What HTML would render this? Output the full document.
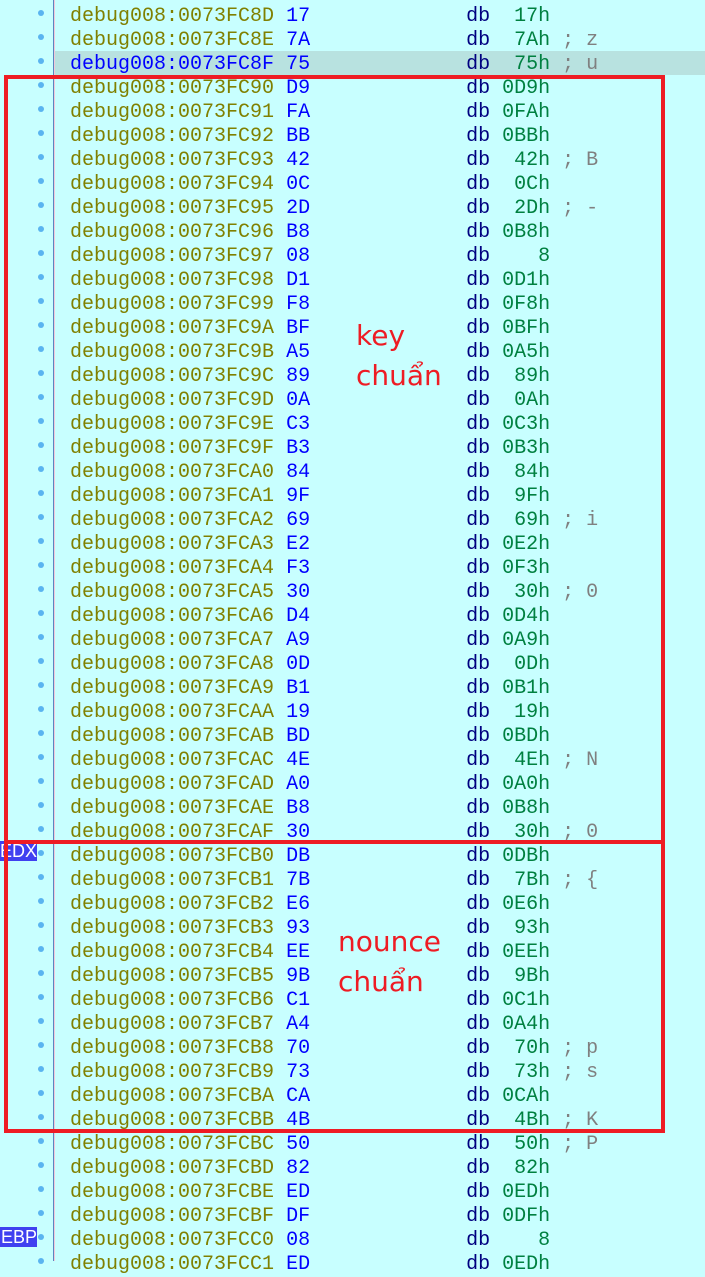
<!DOCTYPE html>
<html><head><meta charset="utf-8"><style>
body{margin:0;width:705px;height:1261px;overflow:hidden;background:#c8ffff;position:relative;font-family:"Liberation Mono",monospace}
#rows{position:absolute;left:0;top:3px;width:705px}
.r{position:relative;height:24px;line-height:24px;font-size:20px;white-space:pre}
.r .t{position:absolute;left:70px;top:2px}
.r.h{background:#b8e2e0}
.r.h::before{content:"";position:absolute;left:0;top:0;width:54px;height:24px;background:#c8ffff}
.d{position:absolute;left:38px;top:7px;width:6px;height:6px;border-radius:50%;background:#5ab4f0}
.a{color:#808000}.b{color:#0000ff}.k{color:#000080}.v{color:#008040}.c{color:#808080}
.h .a{color:#0000ff}
#vl{position:absolute;left:53px;top:0;width:1px;height:1261px;background:#5a86c0}
#vl2{position:absolute;left:54px;top:0;width:1px;height:1261px;background:#f0c8d8}
.box{position:absolute;border:4px solid #ee1c24;box-sizing:border-box}
.lbl{position:absolute;color:#ee1c24;font-family:"DejaVu Sans","Liberation Sans",sans-serif;font-size:28px;line-height:40px}
.reg{position:absolute;left:0;width:37px;height:20px;background:#4040f0;color:#fff;font-family:"Liberation Sans",sans-serif;font-size:18px;line-height:20px;text-align:right}
</style></head><body>
<div id="rows">
<div class="r"><i class="d"></i><span class="t"><span class="a">debug008:0073FC8D</span> <span class="b">17</span>             <span class="k">db</span> <span class="v"> 17h</span></span></div>
<div class="r"><i class="d"></i><span class="t"><span class="a">debug008:0073FC8E</span> <span class="b">7A</span>             <span class="k">db</span> <span class="v"> 7Ah</span> <span class="c">; z</span></span></div>
<div class="r h"><i class="d"></i><span class="t"><span class="a">debug008:0073FC8F</span> <span class="b">75</span>             <span class="k">db</span> <span class="v"> 75h</span> <span class="c">; u</span></span></div>
<div class="r"><i class="d"></i><span class="t"><span class="a">debug008:0073FC90</span> <span class="b">D9</span>             <span class="k">db</span> <span class="v">0D9h</span></span></div>
<div class="r"><i class="d"></i><span class="t"><span class="a">debug008:0073FC91</span> <span class="b">FA</span>             <span class="k">db</span> <span class="v">0FAh</span></span></div>
<div class="r"><i class="d"></i><span class="t"><span class="a">debug008:0073FC92</span> <span class="b">BB</span>             <span class="k">db</span> <span class="v">0BBh</span></span></div>
<div class="r"><i class="d"></i><span class="t"><span class="a">debug008:0073FC93</span> <span class="b">42</span>             <span class="k">db</span> <span class="v"> 42h</span> <span class="c">; B</span></span></div>
<div class="r"><i class="d"></i><span class="t"><span class="a">debug008:0073FC94</span> <span class="b">0C</span>             <span class="k">db</span> <span class="v"> 0Ch</span></span></div>
<div class="r"><i class="d"></i><span class="t"><span class="a">debug008:0073FC95</span> <span class="b">2D</span>             <span class="k">db</span> <span class="v"> 2Dh</span> <span class="c">; -</span></span></div>
<div class="r"><i class="d"></i><span class="t"><span class="a">debug008:0073FC96</span> <span class="b">B8</span>             <span class="k">db</span> <span class="v">0B8h</span></span></div>
<div class="r"><i class="d"></i><span class="t"><span class="a">debug008:0073FC97</span> <span class="b">08</span>             <span class="k">db</span> <span class="v">   8</span></span></div>
<div class="r"><i class="d"></i><span class="t"><span class="a">debug008:0073FC98</span> <span class="b">D1</span>             <span class="k">db</span> <span class="v">0D1h</span></span></div>
<div class="r"><i class="d"></i><span class="t"><span class="a">debug008:0073FC99</span> <span class="b">F8</span>             <span class="k">db</span> <span class="v">0F8h</span></span></div>
<div class="r"><i class="d"></i><span class="t"><span class="a">debug008:0073FC9A</span> <span class="b">BF</span>             <span class="k">db</span> <span class="v">0BFh</span></span></div>
<div class="r"><i class="d"></i><span class="t"><span class="a">debug008:0073FC9B</span> <span class="b">A5</span>             <span class="k">db</span> <span class="v">0A5h</span></span></div>
<div class="r"><i class="d"></i><span class="t"><span class="a">debug008:0073FC9C</span> <span class="b">89</span>             <span class="k">db</span> <span class="v"> 89h</span></span></div>
<div class="r"><i class="d"></i><span class="t"><span class="a">debug008:0073FC9D</span> <span class="b">0A</span>             <span class="k">db</span> <span class="v"> 0Ah</span></span></div>
<div class="r"><i class="d"></i><span class="t"><span class="a">debug008:0073FC9E</span> <span class="b">C3</span>             <span class="k">db</span> <span class="v">0C3h</span></span></div>
<div class="r"><i class="d"></i><span class="t"><span class="a">debug008:0073FC9F</span> <span class="b">B3</span>             <span class="k">db</span> <span class="v">0B3h</span></span></div>
<div class="r"><i class="d"></i><span class="t"><span class="a">debug008:0073FCA0</span> <span class="b">84</span>             <span class="k">db</span> <span class="v"> 84h</span></span></div>
<div class="r"><i class="d"></i><span class="t"><span class="a">debug008:0073FCA1</span> <span class="b">9F</span>             <span class="k">db</span> <span class="v"> 9Fh</span></span></div>
<div class="r"><i class="d"></i><span class="t"><span class="a">debug008:0073FCA2</span> <span class="b">69</span>             <span class="k">db</span> <span class="v"> 69h</span> <span class="c">; i</span></span></div>
<div class="r"><i class="d"></i><span class="t"><span class="a">debug008:0073FCA3</span> <span class="b">E2</span>             <span class="k">db</span> <span class="v">0E2h</span></span></div>
<div class="r"><i class="d"></i><span class="t"><span class="a">debug008:0073FCA4</span> <span class="b">F3</span>             <span class="k">db</span> <span class="v">0F3h</span></span></div>
<div class="r"><i class="d"></i><span class="t"><span class="a">debug008:0073FCA5</span> <span class="b">30</span>             <span class="k">db</span> <span class="v"> 30h</span> <span class="c">; 0</span></span></div>
<div class="r"><i class="d"></i><span class="t"><span class="a">debug008:0073FCA6</span> <span class="b">D4</span>             <span class="k">db</span> <span class="v">0D4h</span></span></div>
<div class="r"><i class="d"></i><span class="t"><span class="a">debug008:0073FCA7</span> <span class="b">A9</span>             <span class="k">db</span> <span class="v">0A9h</span></span></div>
<div class="r"><i class="d"></i><span class="t"><span class="a">debug008:0073FCA8</span> <span class="b">0D</span>             <span class="k">db</span> <span class="v"> 0Dh</span></span></div>
<div class="r"><i class="d"></i><span class="t"><span class="a">debug008:0073FCA9</span> <span class="b">B1</span>             <span class="k">db</span> <span class="v">0B1h</span></span></div>
<div class="r"><i class="d"></i><span class="t"><span class="a">debug008:0073FCAA</span> <span class="b">19</span>             <span class="k">db</span> <span class="v"> 19h</span></span></div>
<div class="r"><i class="d"></i><span class="t"><span class="a">debug008:0073FCAB</span> <span class="b">BD</span>             <span class="k">db</span> <span class="v">0BDh</span></span></div>
<div class="r"><i class="d"></i><span class="t"><span class="a">debug008:0073FCAC</span> <span class="b">4E</span>             <span class="k">db</span> <span class="v"> 4Eh</span> <span class="c">; N</span></span></div>
<div class="r"><i class="d"></i><span class="t"><span class="a">debug008:0073FCAD</span> <span class="b">A0</span>             <span class="k">db</span> <span class="v">0A0h</span></span></div>
<div class="r"><i class="d"></i><span class="t"><span class="a">debug008:0073FCAE</span> <span class="b">B8</span>             <span class="k">db</span> <span class="v">0B8h</span></span></div>
<div class="r"><i class="d"></i><span class="t"><span class="a">debug008:0073FCAF</span> <span class="b">30</span>             <span class="k">db</span> <span class="v"> 30h</span> <span class="c">; 0</span></span></div>
<div class="r"><i class="d"></i><span class="t"><span class="a">debug008:0073FCB0</span> <span class="b">DB</span>             <span class="k">db</span> <span class="v">0DBh</span></span></div>
<div class="r"><i class="d"></i><span class="t"><span class="a">debug008:0073FCB1</span> <span class="b">7B</span>             <span class="k">db</span> <span class="v"> 7Bh</span> <span class="c">; {</span></span></div>
<div class="r"><i class="d"></i><span class="t"><span class="a">debug008:0073FCB2</span> <span class="b">E6</span>             <span class="k">db</span> <span class="v">0E6h</span></span></div>
<div class="r"><i class="d"></i><span class="t"><span class="a">debug008:0073FCB3</span> <span class="b">93</span>             <span class="k">db</span> <span class="v"> 93h</span></span></div>
<div class="r"><i class="d"></i><span class="t"><span class="a">debug008:0073FCB4</span> <span class="b">EE</span>             <span class="k">db</span> <span class="v">0EEh</span></span></div>
<div class="r"><i class="d"></i><span class="t"><span class="a">debug008:0073FCB5</span> <span class="b">9B</span>             <span class="k">db</span> <span class="v"> 9Bh</span></span></div>
<div class="r"><i class="d"></i><span class="t"><span class="a">debug008:0073FCB6</span> <span class="b">C1</span>             <span class="k">db</span> <span class="v">0C1h</span></span></div>
<div class="r"><i class="d"></i><span class="t"><span class="a">debug008:0073FCB7</span> <span class="b">A4</span>             <span class="k">db</span> <span class="v">0A4h</span></span></div>
<div class="r"><i class="d"></i><span class="t"><span class="a">debug008:0073FCB8</span> <span class="b">70</span>             <span class="k">db</span> <span class="v"> 70h</span> <span class="c">; p</span></span></div>
<div class="r"><i class="d"></i><span class="t"><span class="a">debug008:0073FCB9</span> <span class="b">73</span>             <span class="k">db</span> <span class="v"> 73h</span> <span class="c">; s</span></span></div>
<div class="r"><i class="d"></i><span class="t"><span class="a">debug008:0073FCBA</span> <span class="b">CA</span>             <span class="k">db</span> <span class="v">0CAh</span></span></div>
<div class="r"><i class="d"></i><span class="t"><span class="a">debug008:0073FCBB</span> <span class="b">4B</span>             <span class="k">db</span> <span class="v"> 4Bh</span> <span class="c">; K</span></span></div>
<div class="r"><i class="d"></i><span class="t"><span class="a">debug008:0073FCBC</span> <span class="b">50</span>             <span class="k">db</span> <span class="v"> 50h</span> <span class="c">; P</span></span></div>
<div class="r"><i class="d"></i><span class="t"><span class="a">debug008:0073FCBD</span> <span class="b">82</span>             <span class="k">db</span> <span class="v"> 82h</span></span></div>
<div class="r"><i class="d"></i><span class="t"><span class="a">debug008:0073FCBE</span> <span class="b">ED</span>             <span class="k">db</span> <span class="v">0EDh</span></span></div>
<div class="r"><i class="d"></i><span class="t"><span class="a">debug008:0073FCBF</span> <span class="b">DF</span>             <span class="k">db</span> <span class="v">0DFh</span></span></div>
<div class="r"><i class="d"></i><span class="t"><span class="a">debug008:0073FCC0</span> <span class="b">08</span>             <span class="k">db</span> <span class="v">   8</span></span></div>
<div class="r"><i class="d"></i><span class="t"><span class="a">debug008:0073FCC1</span> <span class="b">ED</span>             <span class="k">db</span> <span class="v">0EDh</span></span></div>
</div>
<div id="vl"></div><div id="vl2"></div>
<div class="reg" style="top:841px">EDX</div>
<div class="reg" style="top:1227px">EBP</div>
<div class="box" style="left:4px;top:75px;width:661px;height:769px"></div>
<div class="box" style="left:4px;top:840px;width:661px;height:293px"></div>
<div class="lbl" style="left:356px;top:316px">key<br>chuẩn</div>
<div class="lbl" style="left:338px;top:922px">nounce<br>chuẩn</div>
</body></html>
